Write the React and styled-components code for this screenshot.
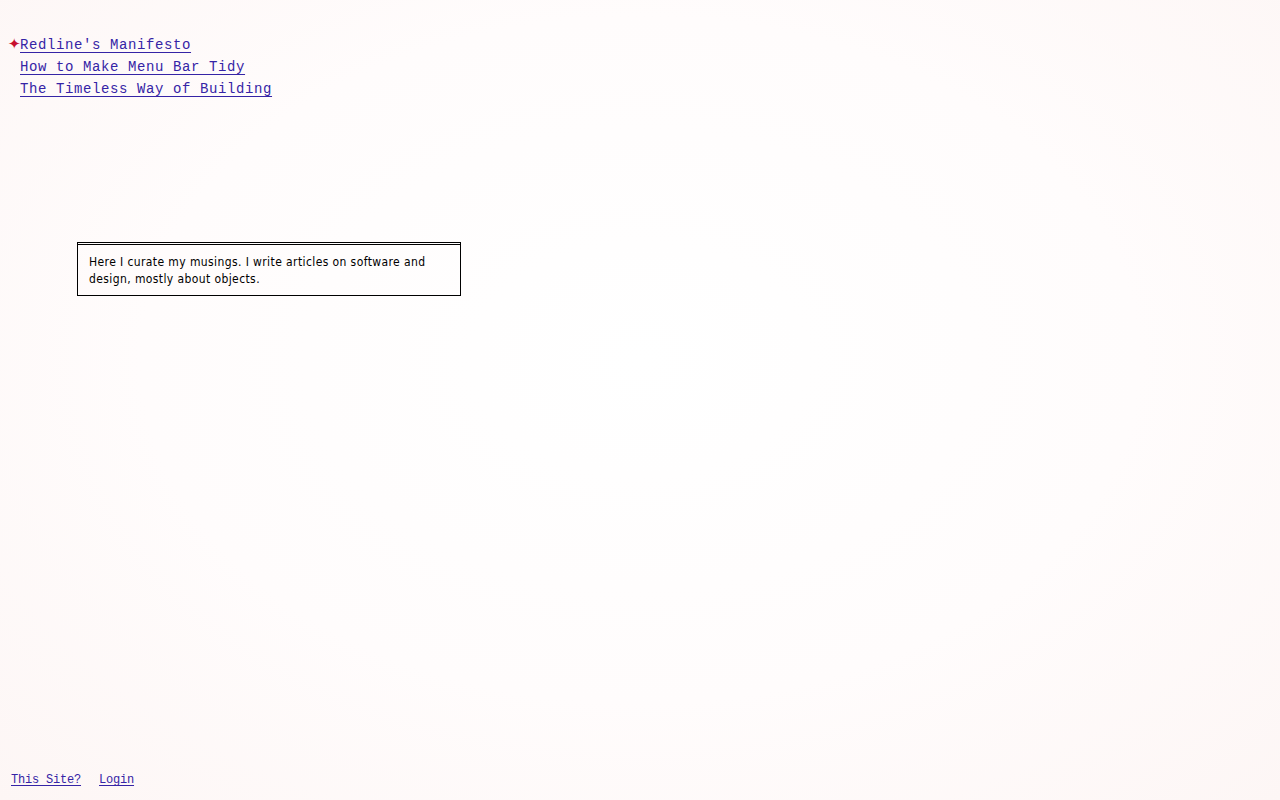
import React from "react";
import styled, { createGlobalStyle } from "styled-components";

const Global = createGlobalStyle`
  html, body {
    margin: 0;
    padding: 0;
    height: 100%;
  }
  body {
    background: radial-gradient(ellipse at 50% 45%, #ffffff 0%, #fffcfc 55%, #fdf6f5 100%);
    font-family: "Liberation Mono", "DejaVu Sans Mono", monospace;
  }
  #root {
    min-height: 100vh;
  }
`;

const Page = styled.div`
  min-height: 800px;
  display: flex;
  flex-direction: column;
  box-sizing: border-box;
`;

const Nav = styled.ul`
  list-style: none;
  margin: 0;
  padding: 36px 0 0 20px;
  display: flex;
  flex-direction: column;
  gap: 4px;
`;

const NavItem = styled.li`
  position: relative;
  line-height: 18px;
`;

const Marker = styled.span`
  position: absolute;
  left: -12px;
  top: -1px;
  color: #c8102e;
  font-size: 15px;
  font-family: "DejaVu Sans", sans-serif;
`;

const NavLink = styled.a`
  color: #3524a6;
  font-size: 14px;
  letter-spacing: 0.6px;
  text-decoration: underline;
  text-underline-offset: 3px;
`;

const Intro = styled.div`
  margin: 144px 0 0 77px;
  width: 384px;
  box-sizing: border-box;
  border: 1px solid #000;
  border-top: 3px double #000;
  padding: 9px 11px 7px 11px;
  font-family: "Liberation Sans Narrow", "DejaVu Sans Condensed", "Liberation Sans", sans-serif;
  font-size: 12px;
  letter-spacing: 0.4px;
  line-height: 17px;
  color: #000;
`;

const Spacer = styled.div`
  flex: 1;
`;

const Footer = styled.footer`
  display: flex;
  gap: 18px;
  padding: 0 0 13px 11px;
`;

const FootLink = styled.a`
  color: #3524a6;
  font-size: 12px;
  letter-spacing: -0.2px;
  text-decoration: underline;
  text-underline-offset: 2px;
`;

const posts = [
  { title: "Redline's Manifesto", current: true },
  { title: "How to Make Menu Bar Tidy" },
  { title: "The Timeless Way of Building" },
];

export default function App() {
  return (
    <Page>
      <Global />
      <Nav>
        {posts.map((p) => (
          <NavItem key={p.title}>
            {p.current && <Marker>✦</Marker>}
            <NavLink href="#">{p.title}</NavLink>
          </NavItem>
        ))}
      </Nav>
      <Intro>
        Here I curate my musings. I write articles on software and design,
        mostly about objects.
      </Intro>
      <Spacer />
      <Footer>
        <FootLink href="#">This Site?</FootLink>
        <FootLink href="#">Login</FootLink>
      </Footer>
    </Page>
  );
}
